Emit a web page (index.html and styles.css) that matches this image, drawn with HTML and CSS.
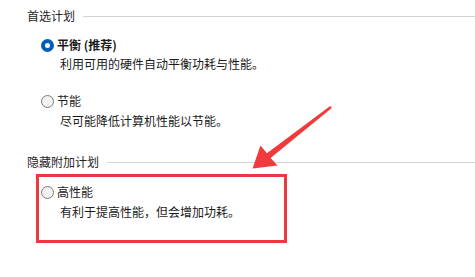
FILE: index.html
```html
<!DOCTYPE html>
<html lang="zh-CN">
<head>
<meta charset="utf-8">
<link rel="stylesheet" href="styles.css">
</head>
<body>
<div class="page">
  <div class="group-head head-first">
    <span class="group-label">首选计划</span>
    <span class="group-line"></span>
  </div>
  <div class="option opt-first">
    <span class="radio checked"></span>
    <span class="opt-name bold">平衡 (推荐)</span>
  </div>
  <div class="desc">利用可用的硬件自动平衡功耗与性能。</div>

  <div class="option opt-second">
    <span class="radio"></span>
    <span class="opt-name">节能</span>
  </div>
  <div class="desc desc-second">尽可能降低计算机性能以节能。</div>

  <div class="group-head head-second">
    <span class="group-label">隐藏附加计划</span>
    <span class="group-line"></span>
  </div>
  <div class="highlight">
    <div class="option">
      <span class="radio"></span>
      <span class="opt-name">高性能</span>
    </div>
    <div class="desc desc-second">有利于提高性能，但会增加功耗。</div>
  </div>
</div>
<svg class="arrow" width="475" height="277" viewBox="0 0 475 277">
  <polygon points="330.2,106 266.9,153.3 260.5,145.5 252.5,168.5 277.5,165.5 270.6,158.1 331.8,108" fill="#f03a3c"/>
</svg>
</body>
</html>
```

FILE: styles.css
```css
html, body {
  margin: 0;
  padding: 0;
  background: #ffffff;
}
body {
  width: 475px;
  height: 277px;
  overflow: hidden;
  position: relative;
  font-family: "Noto Sans CJK SC", "Noto Sans", sans-serif;
  font-size: 12px;
  line-height: 16px;
  color: #1a1a1a;
}
.page {
  padding: 8px 0 0 27px;
}
.group-head {
  display: flex;
  align-items: center;
  height: 16px;
}
.group-label {
  color: #262626;
}
.group-line {
  flex: 1;
  height: 1px;
  background: #d4d4d4;
  margin-left: 8px;
}
.head-second {
  margin-top: 25px;
}
.option {
  display: flex;
  align-items: center;
  height: 16px;
  padding-left: 14px;
}
.opt-first {
  margin-top: 13px;
}
.opt-second {
  margin-top: 21px;
}
.radio {
  width: 13px;
  height: 13px;
  box-sizing: border-box;
  border-radius: 50%;
  border: 1px solid #7a7a7a;
  background: #f2f2f2;
  margin-right: 3px;
  flex: none;
}
.radio.checked {
  border: 4px solid #005fb8;
  background: #ffffff;
}
.opt-name.bold {
  font-weight: 700;
}
.desc {
  margin-top: 3px;
  padding-left: 33px;
}
.desc-second {
  margin-top: 4px;
}
.highlight {
  margin: 4px 0 0 9px;
  width: 251px;
  height: 69px;
  box-sizing: border-box;
  border: 3px solid #e83a3f;
  padding-top: 7px;
}
.highlight .option {
  padding-left: 2px;
}
.highlight .desc {
  padding-left: 21px;
}
.arrow {
  position: absolute;
  left: 0;
  top: 0;
  pointer-events: none;
}
```
